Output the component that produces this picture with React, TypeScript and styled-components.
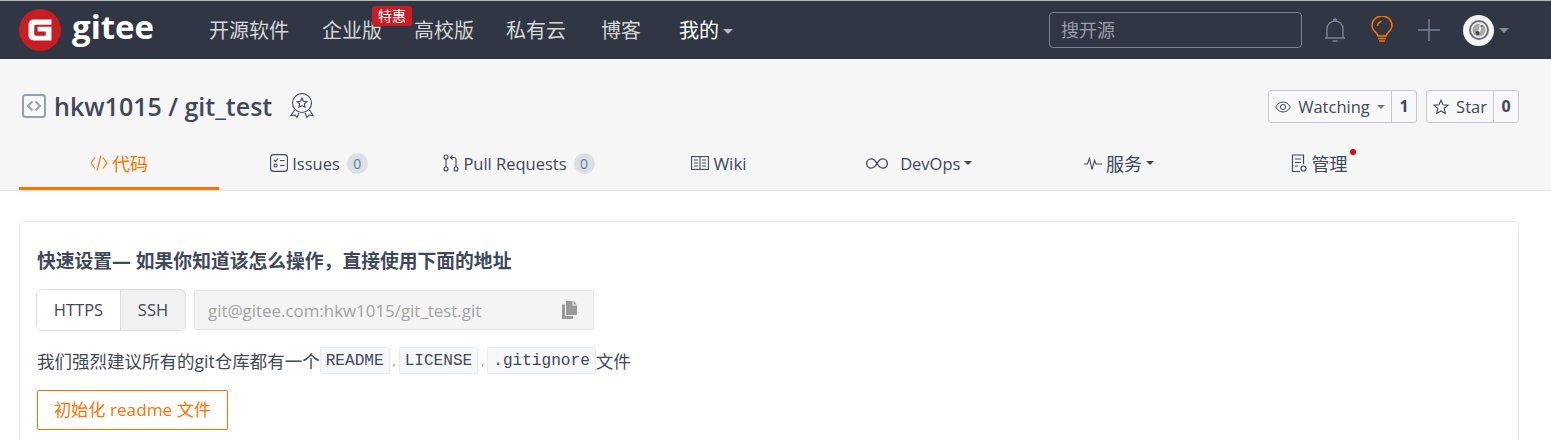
import React from 'react';
import styled, { createGlobalStyle } from 'styled-components';

const Global = createGlobalStyle`
  html, body { margin: 0; padding: 0; height: 440px; overflow: hidden; background: #fff; }
  body { font-family: "Open Sans", "Noto Sans CJK SC", sans-serif; color: #40485b; }
  * { box-sizing: border-box; }
`;

const TopBar = styled.header`
  height: 59px;
  background: #303643;
  border-top: 1px solid #b5b5b5;
  display: flex;
  align-items: center;
  padding: 0 42px 0 19px;
`;
const Brand = styled.div`
  display: flex;
  align-items: center;
  gap: 11px;
  width: 190px;
  margin-top: -1px;
`;
const BrandName = styled.span`
  font-family: "Open Sans", sans-serif;
  font-size: 33px;
  font-weight: 700;
  line-height: 36px;
  color: #fff;
  margin-top: -5px;
`;
const MainNav = styled.nav`
  display: flex;
  align-items: center;
  flex: 1;
`;
const NavLink = styled.a<{ $gap: number; $active?: boolean }>`
  position: relative;
  margin-right: ${p => p.$gap}px;
  margin-top: 2px;
  font-size: 20px;
  line-height: 28px;
  color: ${p => (p.$active ? '#fff' : '#d6d6d6')};
  display: flex;
  align-items: center;
  gap: 4px;
`;
const Promo = styled.span`
  position: absolute;
  top: -11px;
  left: 50px;
  width: 40px;
  height: 20px;
  border-radius: 3px;
  background: #c71d23;
  color: #fff;
  font-size: 14px;
  line-height: 20px;
  text-align: center;
`;
const Caret = styled.i<{ $color: string; $size?: number }>`
  display: inline-block;
  width: 0;
  height: 0;
  border-left: ${p => p.$size ?? 5}px solid transparent;
  border-right: ${p => p.$size ?? 5}px solid transparent;
  border-top: ${p => p.$size ?? 5}px solid ${p => p.$color};
`;
const Search = styled.div`
  width: 253px;
  height: 36px;
  border: 1px solid #7c828f;
  border-radius: 4px;
  padding-left: 11px;
  font-size: 18px;
  line-height: 35px;
  color: #9a9ea6;
  margin-right: 21px;
`;
const NavIcon = styled.span<{ $gap: number }>`
  display: flex;
  margin-right: ${p => p.$gap}px;
`;
const Avatar = styled.span`
  width: 31px;
  height: 31px;
  border-radius: 50%;
  background: #f4f4f4;
  display: flex;
  align-items: center;
  justify-content: center;
  margin-right: 5px;
`;

const RepoHead = styled.section`
  height: 132px;
  background: #f6f6f6;
  border-bottom: 1px solid #e3e3e3;
  padding: 0 32px 0 19px;
`;
const TitleRow = styled.div`
  height: 80px;
  display: flex;
  align-items: center;
  padding-top: 14px;
`;
const RepoIcon = styled.span`
  display: flex;
  margin-left: 3px;
`;
const RepoTitle = styled.h1`
  margin: 0 18px 0 8px;
  font-size: 25px;
  font-weight: 600;
  line-height: 32px;
  color: #40485b;
`;
const Actions = styled.div`
  margin-left: auto;
  display: flex;
  gap: 9px;
`;
const ActionGroup = styled.div`
  height: 33px;
  display: flex;
  background: #f8f8f8;
  border: 1px solid #c4c8d6;
  border-radius: 3px;
  font-size: 16.5px;
  line-height: 31px;
  color: #40485b;
`;
const ActionMain = styled.span<{ $width: number }>`
  width: ${p => p.$width}px;
  display: flex;
  align-items: center;
  justify-content: center;
  gap: 7px;
  padding-top: 1px;
  border-right: 1px solid #c4c8d6;
`;
const ActionCount = styled.strong`
  flex: 1;
  min-width: 24px;
  text-align: center;
  font-size: 16px;
  font-weight: 700;
  color: #40485b;
`;
const Tabs = styled.nav`
  display: flex;
  height: 51px;
`;
const Tab = styled.a<{ $active?: boolean; $size?: number }>`
  position: relative;
  width: 200px;
  height: 51px;
  display: flex;
  align-items: center;
  justify-content: center;
  gap: 4px;
  font-size: ${p => p.$size ?? 16.5}px;
  color: ${p => (p.$active ? '#fe7300' : '#40485b')};
  border-bottom: 3px solid ${p => (p.$active ? '#fe7300' : 'transparent')};
`;
const Pill = styled.span`
  width: 21px;
  height: 21px;
  border-radius: 50%;
  background: #dce0e6;
  color: #6b7c9b;
  font-size: 14px;
  line-height: 21px;
  text-align: center;
  margin-left: 3px;
`;
const Dot = styled.i`
  position: absolute;
  top: 10px;
  left: 131px;
  width: 6px;
  height: 6px;
  border-radius: 50%;
  background: #e30012;
`;

const Card = styled.section`
  margin: 30px 32px 0 19px;
  height: 300px;
  padding: 25px 17px;
  background: #fff;
  border: 1px solid #e8ebef;
  border-radius: 4px;
`;
const Heading = styled.h3`
  margin: 0 0 14px 0;
  font-size: 18.8px;
  font-weight: 700;
  line-height: 28px;
  color: #40485b;
`;
const CloneRow = styled.div`
  display: flex;
  align-items: center;
  gap: 8px;
  margin-left: -1px;
`;
const Switcher = styled.div`
  width: 150px;
  height: 42px;
  display: flex;
  background: #f1f1f1;
  border: 1px solid #dedede;
  border-radius: 6px;
  overflow: hidden;
  font-size: 16.5px;
  color: #40485b;
`;
const SwitchOption = styled.span<{ $on?: boolean; $width: number }>`
  width: ${p => p.$width}px;
  text-align: center;
  line-height: 40px;
  background: ${p => (p.$on ? '#fff' : 'transparent')};
  border-right: ${p => (p.$on ? '1px solid #dedede' : '0')};
`;
const UrlBox = styled.div`
  width: 400px;
  height: 40px;
  padding: 0 16px 0 13px;
  display: flex;
  align-items: center;
  justify-content: space-between;
  background: #f4f4f4;
  border: 1px solid #e3e6ea;
  border-radius: 2px;
  font-size: 16.9px;
  color: #a3a3a3;
`;
const Advice = styled.p`
  margin: 16px 0 16px 0;
  display: flex;
  align-items: center;
  height: 27px;
  font-size: 17.5px;
  color: #40485b;
`;
const Code = styled.code`
  height: 27px;
  padding: 0 5px;
  display: inline-block;
  background: #f6f7f9;
  border: 1px solid #e8ebef;
  border-radius: 2px;
  font-family: "Liberation Mono", monospace;
  font-size: 16.1px;
  line-height: 27px;
  color: #40485b;
`;
const Sep = styled.span`
  width: 9px;
  text-align: center;
  color: #8a8f9a;
  font-size: 12px;
`;
const InitButton = styled.a`
  display: block;
  width: 191px;
  height: 40px;
  border: 1px solid #fe7300;
  border-radius: 2px;
  text-align: center;
  font-size: 17.2px;
  line-height: 38px;
  color: #fe7300;
`;

const GiteeLogo = () => (
  <svg width="42" height="42" viewBox="0 0 44 44" aria-hidden>
    <circle cx="22" cy="22" r="22" fill="#c71d23" />
    <path d="M10 16a5 5 0 0 1 5-5h19v5.500H17.500a1.500 1.500 0 0 0-1.500 1.500v8.500a1.500 1.500 0 0 0 1.500 1.500H28v-4.500H19.500v-5H34V33H15a5 5 0 0 1-5-5z" fill="#fff" />
  </svg>
);
const Bell = () => (
  <svg width="24" height="28" viewBox="0 0 24 28" fill="none" stroke="#77839b" strokeWidth="1.4" aria-hidden>
    <path d="M2 22h20M4 22V13a8 8 0 0 1 16 0v9M10.500 5.200a1.600 1.600 0 1 1 3 0M9.500 25h5" />
  </svg>
);
const Bulb = () => (
  <svg width="24" height="28" viewBox="0 0 24 28" fill="none" stroke="#fe7300" strokeWidth="1.5" aria-hidden>
    <path d="M8 20c0-3-6-5-6-10.500a10 9.500 0 0 1 20 0C22 15 16 17 16 20zM8 22.500h8M9 25h6M7.500 10a5 5 0 0 1 4-4.500" />
  </svg>
);
const Plus = () => (
  <svg width="22" height="22" viewBox="0 0 22 22" stroke="#77839b" strokeWidth="1.4" aria-hidden>
    <path d="M0 11h22M11 0v22" />
  </svg>
);
const AvatarGlyph = () => (
  <svg width="22" height="22" viewBox="0 0 22 22" fill="none" aria-hidden>
    <circle cx="11" cy="11" r="9" stroke="#6f6f6f" strokeWidth="2" />
    <circle cx="11" cy="11" r="6.500" fill="#a9a9a9" />
    <path d="M13 5l-2 8" stroke="#f4f4f4" strokeWidth="2" />
    <circle cx="9.500" cy="14" r="2" fill="#444" />
    <path d="M12.500 7h2" stroke="#444" strokeWidth="1.500" />
  </svg>
);
const RepoGlyph = () => (
  <svg width="24" height="24" viewBox="0 0 24 24" fill="#f8f8fa" stroke="#97a0b3" aria-hidden>
    <rect x="1" y="1" width="22" height="22" rx="2.500" strokeWidth="2" />
    <path d="M10.500 7.500L6 12l4.500 4.500M13.500 7.500L18 12l-4.500 4.500" fill="none" strokeWidth="2" />
  </svg>
);
const Medal = () => (
  <svg width="24" height="26" viewBox="0 0 24 26" fill="none" stroke="#40485b" strokeWidth="1.1" aria-hidden>
    <circle cx="12" cy="10" r="9.500" />
    <path d="M12 5l1.500 3.200 3.400.4-2.500 2.300.7 3.400-3.100-1.700-3.100 1.700.7-3.400-2.500-2.300 3.400-.4z" />
    <path d="M4.500 17L1 22.500l4-.5 2 2.500 2-4.500M19.500 17L23 22.500l-4-.5-2 2.500-2-4.500" />
  </svg>
);
const Eye = () => (
  <svg width="16" height="12" viewBox="0 0 16 12" fill="none" stroke="#40485b" aria-hidden>
    <path d="M.7 6C2.500 2.800 5 1 8 1s5.500 1.800 7.300 5C13.500 9.200 11 11 8 11S2.500 9.200.7 6z" />
    <circle cx="8" cy="6" r="2.600" />
  </svg>
);
const StarGlyph = () => (
  <svg width="16" height="16" viewBox="0 0 16 16" fill="none" stroke="#40485b" strokeWidth="1.1" aria-hidden>
    <path d="M8 1.200l2 4.500 4.900.5-3.700 3.300 1.100 4.900L8 12l-4.300 2.400 1.100-4.900L1.100 6.200 6 5.700z" />
  </svg>
);
const CodeGlyph = () => (
  <svg width="18" height="18" viewBox="0 0 18 18" fill="none" stroke="#fe7300" strokeWidth="1.1" aria-hidden>
    <path d="M5 3.500L1 9l4 5.500M13 3.500l4 5.500-4 5.500M10.800 1.500L7.200 16.500" />
  </svg>
);
const IssueGlyph = () => (
  <svg width="18" height="18" viewBox="0 0 18 18" fill="none" stroke="#40485b" strokeWidth="1.1" aria-hidden>
    <rect x=".6" y=".6" width="16.800" height="16.800" rx="3" />
    <path d="M4 6l1.500 1.500L8 4.500M10 6.500h4.500M10 11.500h4.500" />
    <circle cx="5.500" cy="11.500" r="1.500" />
  </svg>
);
const PullGlyph = () => (
  <svg width="16" height="18" viewBox="0 0 16 18" fill="none" stroke="#40485b" strokeWidth="1.1" aria-hidden>
    <circle cx="3" cy="3" r="2" />
    <circle cx="3" cy="15" r="2" />
    <circle cx="13" cy="15" r="2" />
    <path d="M3 5v8M13 13V5.500A2 2 0 0 0 11 3.500H7.500M9.500 1.500l-2 2 2 2" />
  </svg>
);
const BookGlyph = () => (
  <svg width="18" height="14" viewBox="0 0 18 14" fill="none" stroke="#40485b" strokeWidth="1.1" aria-hidden>
    <rect x=".6" y=".6" width="16.800" height="12.800" />
    <path d="M9 1v12M3 4h4M3 7h4M3 10h4M11 4h4M11 7h4M11 10h4" />
  </svg>
);
const InfinityGlyph = () => (
  <svg width="22" height="11" viewBox="0 0 24 12" fill="none" stroke="#40485b" strokeWidth="1.500" aria-hidden>
    <path d="M12 6C10 2.500 8 1 5.700 1a5 5 0 0 0 0 10C8 11 10 9.500 12 6c2-3.500 4-5 6.300-5a5 5 0 0 1 0 10C16 11 14 9.500 12 6z" />
  </svg>
);
const PulseGlyph = () => (
  <svg width="18" height="14" viewBox="0 0 18 14" fill="none" stroke="#40485b" strokeWidth="1.100" aria-hidden>
    <path d="M0 8h3.500l2-5.500 2.500 11 2.500-9 1.500 3.500H18" />
  </svg>
);
const ManageGlyph = () => (
  <svg width="17" height="19" viewBox="0 0 17 19" fill="none" stroke="#40485b" strokeWidth="1.200" aria-hidden>
    <path d="M9 17.500H1.500V1h11v9M4 5h6M4 8.500h6M4 12h3" />
    <circle cx="12.500" cy="14.500" r="2.500" />
  </svg>
);
const CopyGlyph = () => (
  <svg width="15" height="18" viewBox="0 0 15 18" fill="#9a9a9a" aria-hidden>
    <path d="M4 0h6.500v4.500H15V14H4z" />
    <path d="M11.500 0L15 3.500h-3.500zM0 3.500h3V15h8v3H0z" />
  </svg>
);

export default function App() {
  return (
    <>
      <Global />
      <TopBar>
        <Brand>
          <GiteeLogo />
          <BrandName>gitee</BrandName>
        </Brand>
        <MainNav>
          <NavLink $gap={33}>开源软件</NavLink>
          <NavLink $gap={32}>
            企业版
            <Promo>特惠</Promo>
          </NavLink>
          <NavLink $gap={32}>高校版</NavLink>
          <NavLink $gap={35}>私有云</NavLink>
          <NavLink $gap={38}>博客</NavLink>
          <NavLink $gap={0} $active>
            我的
            <Caret $color="#b9bcc4" />
          </NavLink>
        </MainNav>
        <Search>搜开源</Search>
        <NavIcon $gap={23}><Bell /></NavIcon>
        <NavIcon $gap={24}><Bulb /></NavIcon>
        <NavIcon $gap={23}><Plus /></NavIcon>
        <Avatar><AvatarGlyph /></Avatar>
        <Caret $color="#8a8f9a" />
      </TopBar>
      <RepoHead>
        <TitleRow>
          <RepoIcon><RepoGlyph /></RepoIcon>
          <RepoTitle>hkw1015 / git_test</RepoTitle>
          <Medal />
          <Actions>
            <ActionGroup>
              <ActionMain $width={123}>
                <Eye />
                Watching
                <Caret $color="#6f7686" $size={4} />
              </ActionMain>
              <ActionCount>1</ActionCount>
            </ActionGroup>
            <ActionGroup>
              <ActionMain $width={67}>
                <StarGlyph />
                Star
              </ActionMain>
              <ActionCount>0</ActionCount>
            </ActionGroup>
          </Actions>
        </TitleRow>
        <Tabs>
          <Tab $active $size={18}><CodeGlyph />代码</Tab>
          <Tab><IssueGlyph />Issues<Pill>0</Pill></Tab>
          <Tab><PullGlyph />Pull Requests<Pill>0</Pill></Tab>
          <Tab $size={17}><BookGlyph />Wiki</Tab>
          <Tab><InfinityGlyph />&nbsp;&nbsp;DevOps<Caret $color="#40485b" $size={4} /></Tab>
          <Tab $size={18}><PulseGlyph />服务<Caret $color="#40485b" $size={4} /></Tab>
          <Tab $size={18}><ManageGlyph />管理<Dot /></Tab>
        </Tabs>
      </RepoHead>
      <Card>
        <Heading>快速设置— 如果你知道该怎么操作，直接使用下面的地址</Heading>
        <CloneRow>
          <Switcher>
            <SwitchOption $on $width={84}>HTTPS</SwitchOption>
            <SwitchOption $width={64}>SSH</SwitchOption>
          </Switcher>
          <UrlBox>
            git@gitee.com:hkw1015/git_test.git
            <CopyGlyph />
          </UrlBox>
        </CloneRow>
        <Advice>
          我们强烈建议所有的git仓库都有一个
          <Code>README</Code>
          <Sep>,</Sep>
          <Code>LICENSE</Code>
          <Sep>,</Sep>
          <Code>.gitignore</Code>
          文件
        </Advice>
        <InitButton>初始化 readme 文件</InitButton>
      </Card>
    </>
  );
}
